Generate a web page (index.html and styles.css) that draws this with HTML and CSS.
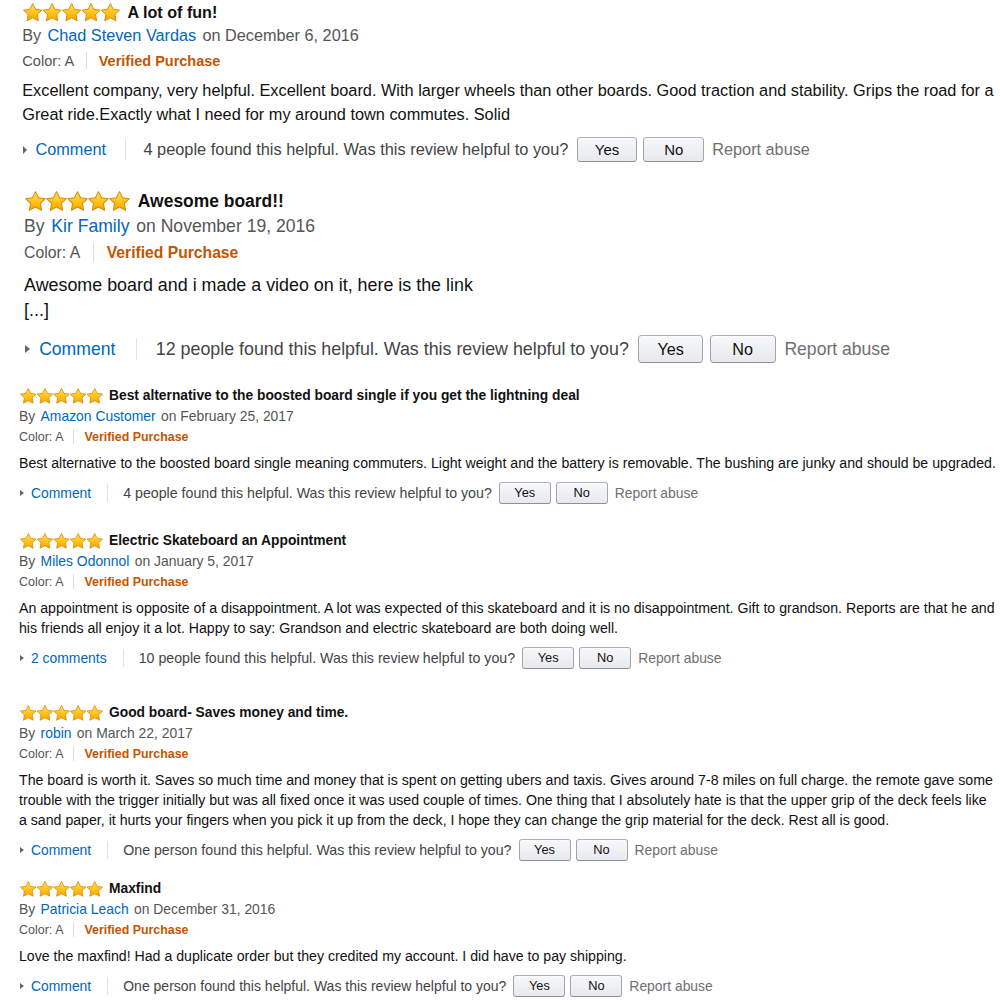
FILE: index.html
```html
<!DOCTYPE html>
<html lang="en">
<head>
<meta charset="utf-8">
<title>Customer reviews</title>
<link rel="stylesheet" href="styles.css">
</head>
<body>
<svg class="defs" width="0" height="0" aria-hidden="true">
  <defs>
    <linearGradient id="starfill" x1="0" y1="0" x2="0" y2="1">
      <stop offset="0" stop-color="#ffdf6b"/>
      <stop offset="0.55" stop-color="#ffc21a"/>
      <stop offset="1" stop-color="#f3a400"/>
    </linearGradient>
    <path id="star" d="M8.3 0.5 L10.75 5.4 L16.1 6.1 L12.2 9.85 L13.15 15.2 L8.3 12.7 L3.45 15.2 L4.4 9.85 L0.5 6.1 L5.85 5.4 Z" fill="url(#starfill)" stroke="#d98a00" stroke-width="0.8" stroke-linejoin="round"/>
  </defs>
</svg>
<main class="reviews">

  <section class="review s1">
    <div class="title-row">
      <svg class="stars" viewBox="0 0 83 16"><use href="#star" x="0"/><use href="#star" x="16.6"/><use href="#star" x="33.2"/><use href="#star" x="49.8"/><use href="#star" x="66.4"/></svg>
      <span class="title">A lot of fun!</span>
    </div>
    <div class="byline">By <a class="author">Chad Steven Vardas</a> on December 6, 2016</div>
    <div class="meta"><span class="variant">Color: A</span><span class="vsep"></span><span class="verified">Verified Purchase</span></div>
    <p class="text">Excellent company, very helpful. Excellent board. With larger wheels than other boards. Good traction and stability. Grips the road for a<br>Great ride.Exactly what I need for my around town commutes. Solid</p>
    <div class="actions">
      <span class="caret"></span><a class="comment">Comment</a><span class="asep"></span>
      <span class="helpful">4 people found this helpful. Was this review helpful to you?</span>
      <span class="btn">Yes</span><span class="btn">No</span>
      <a class="report">Report abuse</a>
    </div>
  </section>

  <section class="review s2">
    <div class="title-row">
      <svg class="stars" viewBox="0 0 83 16"><use href="#star" x="0"/><use href="#star" x="16.6"/><use href="#star" x="33.2"/><use href="#star" x="49.8"/><use href="#star" x="66.4"/></svg>
      <span class="title">Awesome board!!</span>
    </div>
    <div class="byline">By <a class="author">Kir Family</a> on November 19, 2016</div>
    <div class="meta"><span class="variant">Color: A</span><span class="vsep"></span><span class="verified">Verified Purchase</span></div>
    <p class="text">Awesome board and i made a video on it, here is the link<br>[...]</p>
    <div class="actions">
      <span class="caret"></span><a class="comment">Comment</a><span class="asep"></span>
      <span class="helpful">12 people found this helpful. Was this review helpful to you?</span>
      <span class="btn">Yes</span><span class="btn">No</span>
      <a class="report">Report abuse</a>
    </div>
  </section>

  <section class="review s3">
    <div class="title-row">
      <svg class="stars" viewBox="0 0 83 16"><use href="#star" x="0"/><use href="#star" x="16.6"/><use href="#star" x="33.2"/><use href="#star" x="49.8"/><use href="#star" x="66.4"/></svg>
      <span class="title">Best alternative to the boosted board single if you get the lightning deal</span>
    </div>
    <div class="byline">By <a class="author">Amazon Customer</a> on February 25, 2017</div>
    <div class="meta"><span class="variant">Color: A</span><span class="vsep"></span><span class="verified">Verified Purchase</span></div>
    <p class="text">Best alternative to the boosted board single meaning commuters. Light weight and the battery is removable. The bushing are junky and should be upgraded.</p>
    <div class="actions">
      <span class="caret"></span><a class="comment">Comment</a><span class="asep"></span>
      <span class="helpful">4 people found this helpful. Was this review helpful to you?</span>
      <span class="btn">Yes</span><span class="btn">No</span>
      <a class="report">Report abuse</a>
    </div>
  </section>

  <section class="review s4">
    <div class="title-row">
      <svg class="stars" viewBox="0 0 83 16"><use href="#star" x="0"/><use href="#star" x="16.6"/><use href="#star" x="33.2"/><use href="#star" x="49.8"/><use href="#star" x="66.4"/></svg>
      <span class="title">Electric Skateboard an Appointment</span>
    </div>
    <div class="byline">By <a class="author">Miles Odonnol</a> on January 5, 2017</div>
    <div class="meta"><span class="variant">Color: A</span><span class="vsep"></span><span class="verified">Verified Purchase</span></div>
    <p class="text">An appointment is opposite of a disappointment. A lot was expected of this skateboard and it is no disappointment. Gift to grandson. Reports are that he and<br>his friends all enjoy it a lot. Happy to say: Grandson and electric skateboard are both doing well.</p>
    <div class="actions">
      <span class="caret"></span><a class="comment">2 comments</a><span class="asep"></span>
      <span class="helpful">10 people found this helpful. Was this review helpful to you?</span>
      <span class="btn">Yes</span><span class="btn">No</span>
      <a class="report">Report abuse</a>
    </div>
  </section>

  <section class="review s5">
    <div class="title-row">
      <svg class="stars" viewBox="0 0 83 16"><use href="#star" x="0"/><use href="#star" x="16.6"/><use href="#star" x="33.2"/><use href="#star" x="49.8"/><use href="#star" x="66.4"/></svg>
      <span class="title">Good board- Saves money and time.</span>
    </div>
    <div class="byline">By <a class="author">robin</a> on March 22, 2017</div>
    <div class="meta"><span class="variant">Color: A</span><span class="vsep"></span><span class="verified">Verified Purchase</span></div>
    <p class="text">The board is worth it. Saves so much time and money that is spent on getting ubers and taxis. Gives around 7-8 miles on full charge. the remote gave some<br>trouble with the trigger initially but was all fixed once it was used couple of times. One thing that I absolutely hate is that the upper grip of the deck feels like<br>a sand paper, it hurts your fingers when you pick it up from the deck, I hope they can change the grip material for the deck. Rest all is good.</p>
    <div class="actions">
      <span class="caret"></span><a class="comment">Comment</a><span class="asep"></span>
      <span class="helpful">One person found this helpful. Was this review helpful to you?</span>
      <span class="btn">Yes</span><span class="btn">No</span>
      <a class="report">Report abuse</a>
    </div>
  </section>

  <section class="review s6">
    <div class="title-row">
      <svg class="stars" viewBox="0 0 83 16"><use href="#star" x="0"/><use href="#star" x="16.6"/><use href="#star" x="33.2"/><use href="#star" x="49.8"/><use href="#star" x="66.4"/></svg>
      <span class="title">Maxfind</span>
    </div>
    <div class="byline">By <a class="author">Patricia Leach</a> on December 31, 2016</div>
    <div class="meta"><span class="variant">Color: A</span><span class="vsep"></span><span class="verified">Verified Purchase</span></div>
    <p class="text">Love the maxfind! Had a duplicate order but they credited my account. I did have to pay shipping.</p>
    <div class="actions">
      <span class="caret"></span><a class="comment">Comment</a><span class="asep"></span>
      <span class="helpful">One person found this helpful. Was this review helpful to you?</span>
      <span class="btn">Yes</span><span class="btn">No</span>
      <a class="report">Report abuse</a>
    </div>
  </section>

</main>
</body>
</html>
```

FILE: styles.css
```css
html, body {
  margin: 0;
  padding: 0;
  background: #ffffff;
}

body {
  width: 1000px;
  height: 1000px;
  overflow: hidden;
  font-family: "Liberation Sans", Arial, sans-serif;
  color: #111111;
}

.defs {
  display: block;
  width: 0;
  height: 0;
}

.reviews {
  display: flex;
  flex-direction: column;
  padding-top: 1px;
}

.review {
  padding-left: 19px;
  font-size: 13.9px;
}

.s1 { zoom: 1.17; margin-top: 0; }
.s2 { zoom: 1.265; margin-top: 20.6px; }
.s3 { margin-top: 23px; }
.s4 { margin-top: 27px; }
.s5 { margin-top: 34px; }
.s6 { margin-top: 18px; }

.title-row {
  display: flex;
  align-items: center;
  height: 20px;
  white-space: nowrap;
}

.stars {
  width: 83px;
  height: 16px;
  margin-left: 1px;
  flex: none;
}

.title {
  margin-left: 6px;
  font-weight: bold;
  font-size: 13.8px;
  color: #111111;
}

.byline {
  height: 20px;
  line-height: 20px;
  color: #555555;
  white-space: nowrap;
}

.author {
  display: inline-block;
  margin: 0 1.5px;
  color: #0066c0;
}

.meta {
  display: flex;
  align-items: center;
  height: 20px;
  margin-top: 1px;
  white-space: nowrap;
}

.variant {
  font-size: 12.5px;
  color: #555555;
}

.vsep {
  width: 1px;
  height: 15px;
  background: #dddddd;
  margin: 0 10px 0 10px;
}

.verified {
  font-size: 12.4px;
  font-weight: bold;
  color: #c45500;
}

.text {
  margin: 6px 0 0 0;
  font-size: 14.15px;
  line-height: 20px;
  white-space: nowrap;
  color: #111111;
}

.s1 .text {
  font-size: 13.95px;
}

.actions {
  display: flex;
  align-items: center;
  height: 22px;
  margin-top: 9px;
  white-space: nowrap;
}

.caret {
  width: 0;
  height: 0;
  margin-left: 1px;
  border-left: 4px solid #666666;
  border-top: 3.5px solid transparent;
  border-bottom: 3.5px solid transparent;
}

.comment {
  margin-left: 7px;
  color: #0066c0;
}

.asep {
  width: 1px;
  height: 18px;
  background: #e3e3e3;
  margin: 0 15px 0 16px;
}

.helpful {
  font-size: 14.2px;
  color: #444444;
}

.s1 .helpful {
  font-size: 14px;
}

.s2 .helpful {
  font-size: 14.1px;
}

.s6 .helpful {
  font-size: 14px;
}

.btn {
  display: flex;
  align-items: center;
  justify-content: center;
  box-sizing: border-box;
  width: 52px;
  height: 22px;
  margin-left: 5px;
  border: 1px solid #adb1b8;
  border-color: #adb1b8 #a2a6ac #8d9096;
  border-radius: 3px;
  background: linear-gradient(#f7f8fa, #e7e9ec);
  box-shadow: inset 0 1px 0 rgba(255, 255, 255, 0.6);
  font-size: 12.8px;
  color: #111111;
}

.helpful + .btn {
  margin-left: 7px;
}

.report {
  margin-left: 7px;
  color: #6f6f6f;
}
```
